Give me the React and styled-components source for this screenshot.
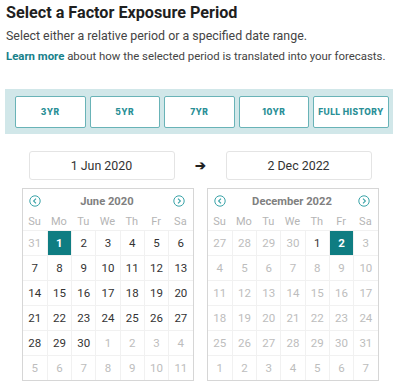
import styled, { createGlobalStyle } from "styled-components";

const GlobalStyle = createGlobalStyle`
  body {
    margin: 0;
    background: #fff;
    font-family: Roboto, "Liberation Sans", sans-serif;
    color: #222;
  }
`;

const StyledPage = styled.div`
  padding: 2px 0 0 6px;
`;

const StyledTitle = styled.h2`
  margin: 0;
  font-size: 16.2px;
  line-height: 22px;
  font-weight: 700;
  color: #1f1f1f;
`;

const StyledPara = styled.p`
  margin: ${(p) => (p.$first ? "2px" : "0")} 0 0;
  font-size: ${(p) => (p.$small ? "11.4px" : "12.4px")};
  line-height: 20px;
  color: #444;
  white-space: nowrap;
`;

const StyledLink = styled.a`
  color: #17808a;
  font-weight: 700;
  text-decoration: none;
`;

const StyledBand = styled.div`
  display: flex;
  gap: 4px;
  margin: 23px 1px 0 -1px;
  padding: 7px 4px 6px 10px;
  background: #d1e7e9;
`;

const StyledPresetButton = styled.button`
  flex: ${(p) => (p.$wide ? "0 0 76px" : "1 1 0")};
  height: 32px;
  padding: 0;
  background: #fff;
  border: 1px solid #69b3b7;
  border-radius: 2px;
  font-family: Inter, "Noto Sans", sans-serif;
  font-size: 8.5px;
  font-weight: 800;
  letter-spacing: 0.4px;
  color: #2a8f96;
  cursor: pointer;
`;

const StyledRangeRow = styled.div`
  display: flex;
  justify-content: center;
  align-items: center;
  gap: 20px;
  margin-top: 17px;
`;

const StyledDateInput = styled.div`
  width: 146px;
  height: 29px;
  box-sizing: border-box;
  display: flex;
  align-items: center;
  justify-content: center;
  border: 1px solid #e4e4e4;
  border-radius: 3px;
  font-size: 12.4px;
  color: #333;
`;

const StyledArrow = styled.span`
  font-size: 13px;
  font-weight: 700;
  color: #222;
`;

const StyledCalendarRow = styled.div`
  display: flex;
  justify-content: center;
  gap: 13px;
  margin-top: 8px;
`;

const StyledCalendar = styled.div`
  width: 172px;
  box-sizing: border-box;
  border: 1px solid #d6d6d6;
`;

const StyledCalHeader = styled.div`
  display: flex;
  align-items: center;
  justify-content: space-between;
  height: 24px;
  padding: 0 7px 0 6px;
`;

const StyledMonth = styled.span`
  font-size: 11.2px;
  font-weight: 700;
  color: #808080;
`;

const StyledNavIcon = styled.svg`
  width: 12px;
  height: 12px;
  display: block;
`;

const StyledGrid = styled.div`
  display: grid;
  grid-template-columns: repeat(7, 1fr);
`;

const StyledWeekday = styled.div`
  height: 17px;
  display: flex;
  align-items: center;
  justify-content: center;
  font-size: 11px;
  color: #b5b5b5;
`;

const StyledDay = styled.div`
  height: 24px;
  display: flex;
  align-items: center;
  justify-content: center;
  font-size: 11.5px;
  border-top: 1px solid #f1f1f1;
  border-left: ${(p) => (p.$first ? "none" : "1px solid #f1f1f1")};
  background: ${(p) => (p.$selected ? "#0f7d82" : "transparent")};
  color: ${(p) => (p.$selected ? "#fff" : p.$muted ? "#bdbdbd" : "#333")};
  font-weight: ${(p) => (p.$selected ? 700 : 400)};
`;

function NavIcon({ dir }) {
  return (
    <StyledNavIcon viewBox="0 0 12 12">
      <circle cx="6" cy="6" r="5.2" fill="none" stroke="#3aa3a8" strokeWidth="1" />
      <path
        d={dir === "left" ? "M7 3.6 L4.6 6 L7 8.4" : "M5 3.6 L7.4 6 L5 8.4"}
        fill="none"
        stroke="#3aa3a8"
        strokeWidth="1.1"
      />
    </StyledNavIcon>
  );
}

const weekdays = ["Su", "Mo", "Tu", "We", "Th", "Fr", "Sa"];

function Calendar({ title, days }) {
  return (
    <StyledCalendar>
      <StyledCalHeader>
        <NavIcon dir="left" />
        <StyledMonth>{title}</StyledMonth>
        <NavIcon dir="right" />
      </StyledCalHeader>
      <StyledGrid>
        {weekdays.map((w) => (
          <StyledWeekday key={w}>{w}</StyledWeekday>
        ))}
        {days.map((d, i) => (
          <StyledDay
            key={i}
            $first={i % 7 === 0}
            $muted={d.muted}
            $selected={d.selected}
          >
            {d.n}
          </StyledDay>
        ))}
      </StyledGrid>
    </StyledCalendar>
  );
}

function buildDays(start, prevLen, monthLen, isMuted, selected) {
  const days = [];
  for (let i = prevLen - start + 1; i <= prevLen; i++) days.push({ n: i, muted: true });
  for (let i = 1; i <= monthLen; i++)
    days.push({ n: i, muted: isMuted(i), selected: i === selected });
  let n = 1;
  while (days.length < 42) days.push({ n: n++, muted: true });
  return days;
}

export default function App() {
  const presets = ["3YR", "5YR", "7YR", "10YR", "FULL HISTORY"];
  const juneDays = buildDays(1, 31, 30, () => false, 1);
  const decDays = buildDays(4, 30, 31, (i) => i > 2, 2);

  return (
    <StyledPage>
      <GlobalStyle />
      <StyledTitle>Select a Factor Exposure Period</StyledTitle>
      <StyledPara $first>Select either a relative period or a specified date range.</StyledPara>
      <StyledPara $small>
        <StyledLink href="#">Learn more</StyledLink> about how the selected period is
        translated into your forecasts.
      </StyledPara>
      <StyledBand>
        {presets.map((p) => (
          <StyledPresetButton key={p} $wide={p === "FULL HISTORY"}>
            {p}
          </StyledPresetButton>
        ))}
      </StyledBand>
      <StyledRangeRow>
        <StyledDateInput>1 Jun 2020</StyledDateInput>
        <StyledArrow>➔</StyledArrow>
        <StyledDateInput>2 Dec 2022</StyledDateInput>
      </StyledRangeRow>
      <StyledCalendarRow>
        <Calendar title="June 2020" days={juneDays} />
        <Calendar title="December 2022" days={decDays} />
      </StyledCalendarRow>
    </StyledPage>
  );
}
